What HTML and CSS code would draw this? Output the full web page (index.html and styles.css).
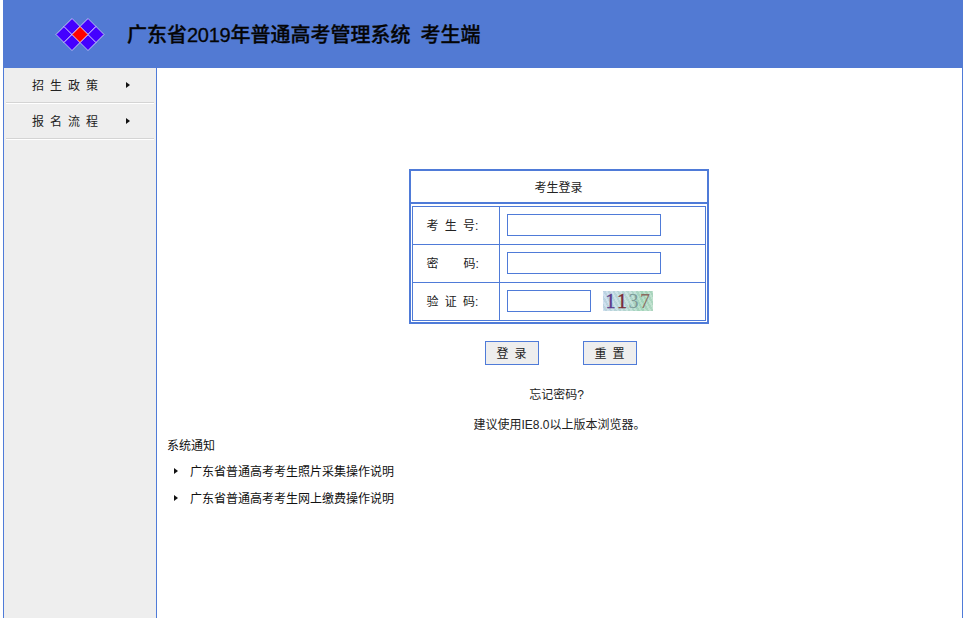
FILE: index.html
```html
<!DOCTYPE html>
<html lang="zh-CN">
<head>
<meta charset="utf-8">
<title>广东省2019年普通高考管理系统 考生端</title>
<link rel="stylesheet" href="styles.css">
</head>
<body>
<div class="page">
  <header class="header">
    <svg class="logo" width="48" height="34" viewBox="56 15.5 48 34" aria-hidden="true">
      <g class="cell">
        <polygon points="64,24 72,32 64,40 56,32"/>
        <polygon points="72,16 80,24 72,32 64,24"/>
        <polygon points="72,32 80,40 72,48 64,40"/>
        <polygon points="88,16 96,24 88,32 80,24"/>
        <polygon points="88,32 96,40 88,48 80,40"/>
        <polygon points="96,24 104,32 96,40 88,32"/>
        <polygon class="cell-red" points="80,24 88,32 80,40 72,32"/>
      </g>
    </svg>
    <h1 class="title">广东省<span class="year">2019</span>年普通高考管理系统&nbsp; 考生端</h1>
  </header>
  <div class="body">
    <nav class="sidebar">
      <a class="nav-item"><span class="nav-label">招 生 政 策</span><i class="arrow"></i></a>
      <a class="nav-item"><span class="nav-label">报 名 流 程</span><i class="arrow"></i></a>
    </nav>
    <main class="main">
      <div class="login">
        <div class="login-title">考生登录</div>
        <table class="login-table">
          <tr>
            <th class="label">考 生 号:</th>
            <td class="field"><input class="input" type="text"></td>
          </tr>
          <tr>
            <th class="label">密 &nbsp; &nbsp;码:</th>
            <td class="field"><input class="input" type="password"></td>
          </tr>
          <tr>
            <th class="label">验 证 码:</th>
            <td class="field captcha-field">
              <input class="input input-short" type="text">
              <span class="captcha"><span class="d1">1</span><span class="d2">1</span><span class="d3">3</span><span class="d4">7</span></span>
            </td>
          </tr>
        </table>
      </div>
      <div class="buttons">
        <button class="btn" type="button">登 录</button>
        <button class="btn" type="button">重 置</button>
      </div>
      <p class="line forgot">忘记密码?</p>
      <p class="line hint">建议使用IE8.0以上版本浏览器。</p>
      <section class="notice">
        <div class="notice-title">系统通知</div>
        <ul class="notice-list">
          <li class="notice-item"><i class="arrow"></i><span>广东省普通高考考生照片采集操作说明</span></li>
          <li class="notice-item"><i class="arrow"></i><span>广东省普通高考考生网上缴费操作说明</span></li>
        </ul>
      </section>
    </main>
  </div>
</div>
</body>
</html>
```
FILE: styles.css
```css
* { box-sizing: border-box; }
html, body { margin: 0; padding: 0; height: 100%; overflow: hidden; background: #fff; }
body {
  font-family: "Liberation Sans", "Noto Sans CJK SC", sans-serif;
  font-size: 12px;
  color: #111;
}
.page { margin-left: 3px; width: 960px; height: 618px; display: flex; flex-direction: column; }
.header {
  height: 68px;
  flex: none;
  background: #527ad3;
  display: flex;
  align-items: center;
  padding-left: 53px;
}
.logo { display: block; margin-top: 1px; overflow: visible; }
.cell polygon { fill: #4400ff; stroke: #fff; stroke-width: 1; stroke-dasharray: 1 0.5; }
.cell .cell-red { fill: #ff0000; }
.title {
  margin: 2px 0 0 23px;
  font-size: 20px;
  font-weight: 500;
  line-height: 28px;
  color: #050505;
  white-space: nowrap;
  word-spacing: -0.5px;
  -webkit-text-stroke: 0.3px #050505;
}
.year { letter-spacing: -0.25px; }
.body {
  flex: 1;
  display: flex;
  border-left: 1px solid #4f7bd8;
  border-right: 1px solid #4f7bd8;
}
.sidebar { width: 153px; flex: none; background: #eee; border-right: 1px solid #4f7bd8; padding: 0 2px; }
.nav-item {
  display: flex;
  align-items: center;
  height: 36px;
  padding-left: 26px;
  border-bottom: 1px solid #d4d4d4;
  box-shadow: 0 1px 0 #fff;
  color: #222;
}
.nav-item:first-child { height: 35px; }
.nav-label { word-spacing: 2.67px; width: 94px; white-space: nowrap; margin-bottom: 1px; }
.nav-item:first-child .nav-label { margin-bottom: 2px; }
.arrow {
  display: inline-block;
  width: 0;
  height: 0;
  border-left: 4px solid #111;
  border-top: 3.5px solid transparent;
  border-bottom: 3.5px solid transparent;
}
.main { flex: 1; padding: 101px 2px 0 0; display: flex; flex-direction: column; align-items: center; min-width: 0; }
.login { width: 300px; height: 155px; flex: none; border: 2px solid #4f7bd8; }
.login-title {
  height: 33px;
  line-height: 35px;
  text-align: center;
  border-bottom: 2px solid #4f7bd8;
  color: #222;
}
.login-table {
  margin: 2px 1px 0;
  width: 294px;
  height: 115px;
  border-collapse: collapse;
  border: 1px solid #4f7bd8;
  table-layout: fixed;
}
.login-table th, .login-table td { border: 1px solid #4f7bd8; padding: 0 0 2px; height: 38px; }
.login-table .label {
  width: 87px;
  font-weight: 400;
  text-align: left;
  padding-left: 14px;
  word-spacing: 2.9px;
  white-space: nowrap;
  color: #222;
}
.login-table .field { padding-left: 7px; }
.captcha-field { white-space: nowrap; }
.input {
  display: inline-block;
  vertical-align: middle;
  width: 154px;
  height: 22px;
  margin: 0;
  padding: 0 2px;
  border: 1px solid #4f7bd8;
  border-radius: 0;
  background: #fff;
  outline: none;
}
.input-short { width: 84px; }
.captcha {
  display: inline-flex;
  vertical-align: middle;
  align-items: center;
  justify-content: center;
  gap: 1.5px;
  width: 50px;
  height: 20px;
  margin-left: 9px;
  font-family: "Liberation Serif", serif;
  font-size: 20px;
  line-height: 20px;
  background:
    repeating-linear-gradient(60deg, rgba(255,255,255,.18) 0 2px, rgba(120,170,150,.12) 2px 4px),
    linear-gradient(100deg, #c6d8ee 0%, #bcdcd8 50%, #a6d8be 75%, #b6dcc6 100%);
}
.d1 { color: #5b3a8c; -webkit-text-stroke: 0.4px #5b3a8c; }
.d2 { color: #7a2c34; -webkit-text-stroke: 0.4px #7a2c34; }
.d3 { color: #7d9a98; }
.d4 { color: #8a6a60; }
.buttons { display: flex; gap: 44px; margin-top: 17px; padding-left: 4px; flex: none; }
.btn {
  width: 54px;
  height: 24px;
  padding: 0 0 2px;
  border: 1px solid #4f7bd8;
  border-radius: 0;
  background: #eee;
  font: inherit;
  color: #222;
  word-spacing: 2.67px;
}
.line { margin: 0; height: 20px; line-height: 20px; flex: none; color: #222; }
.forgot { margin-top: 20px; margin-right: 4px; }
.hint { margin-top: 10px; margin-left: 2px; }
.notice { align-self: stretch; padding-left: 10px; margin-top: 1px; }
.notice-title { height: 20px; line-height: 20px; }
.notice-list { list-style: none; margin: 4px 0 0; padding: 0 0 0 6px; }
.notice-item { display: flex; align-items: center; height: 20px; margin-bottom: 7px; }
.notice-item .arrow { margin: 2px 12px 0 1px; }
```
